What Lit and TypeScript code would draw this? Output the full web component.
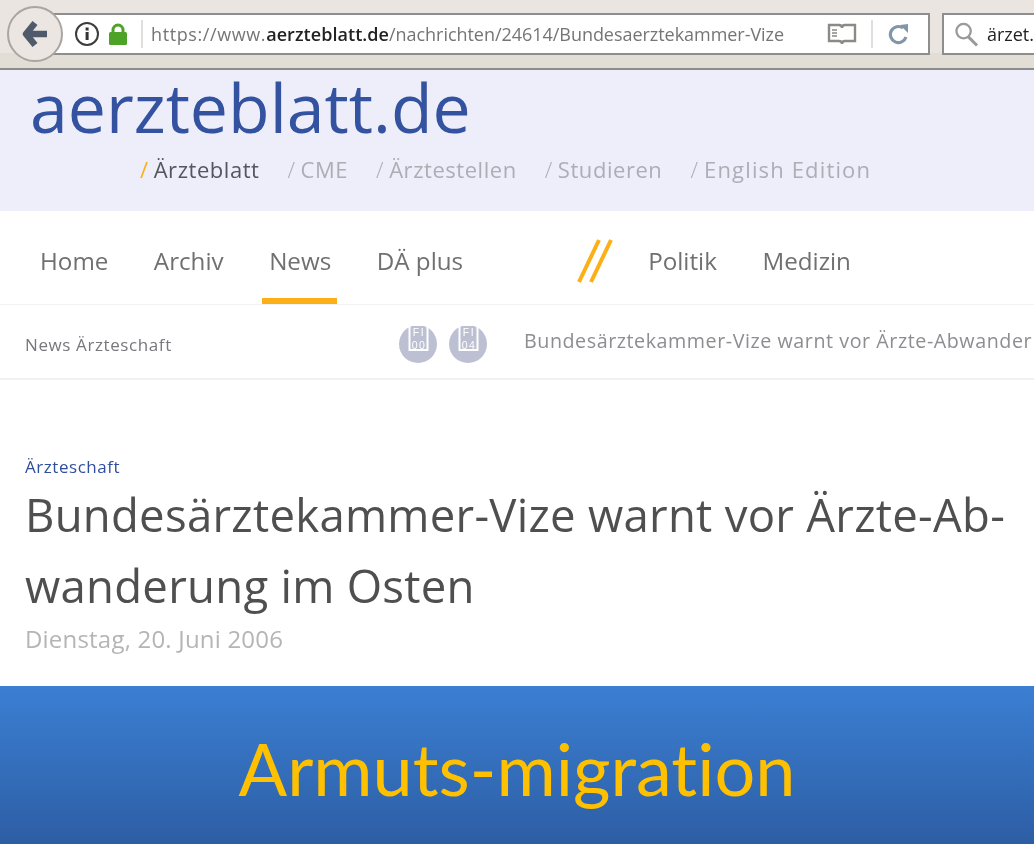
import { LitElement, html, css } from "lit";
import { customElement } from "lit/decorators.js";

@customElement("app-root")
export class AppRoot extends LitElement {
  static styles = css`
    :host {
      display: block;
      width: 1034px;
      height: 844px;
      overflow: hidden;
      background: #fff;
      font-family: "Open Sans", "Noto Sans", sans-serif;
      filter: blur(0.55px);
    }
    .chrome {
      position: relative;
      height: 70px;
      box-sizing: border-box;
      padding: 13px 0 0 49px;
      display: flex;
      gap: 12px;
      align-items: flex-start;
      background: linear-gradient(#ebe5e2 0 78%, #e2ddd5 78% 100%);
      border-bottom: 2px solid #8c8c8c;
    }
    .back {
      position: absolute;
      left: 7px;
      top: 6px;
      width: 56px;
      height: 56px;
      box-sizing: border-box;
      border-radius: 50%;
      border: 2px solid #aaa5a0;
      background: #ece6e2;
      display: flex;
      align-items: center;
      justify-content: center;
    }
    .urlbar {
      width: 881px;
      height: 42px;
      box-sizing: border-box;
      flex: none;
      background: #fff;
      border: 2px solid #8e8e8e;
      display: flex;
      align-items: center;
      padding-left: 23px;
    }
    .urlbar .info { margin-right: 8px; }
    .sep {
      width: 2px;
      height: 28px;
      background: #e2dedb;
      flex: none;
    }
    .sep.a { margin: 0 8px 0 13px; }
    .sep.b { margin: 0 15px 0 14px; }
    .url {
      width: 634px;
      flex: none;
      overflow: hidden;
      white-space: nowrap;
      font-size: 18px;
      color: #757575;
      letter-spacing: -0.04px;
    }
    .url span { letter-spacing: 0.6px; }
    .url b { color: #222; font-weight: 600; letter-spacing: 0.05px; }
    .book { margin-left: 42px; }
    .search {
      flex: 1;
      height: 42px;
      box-sizing: border-box;
      background: #fff;
      border: 2px solid #8e8e8e;
      border-right: none;
      display: flex;
      align-items: center;
      padding-left: 10px;
      gap: 8px;
      font-size: 18px;
      color: #222;
      overflow: hidden;
      white-space: nowrap;
    }
    .brand {
      height: 141px;
      box-sizing: border-box;
      background: #eeeefb;
      padding: 0 0 0 30px;
    }
    .logo {
      font-size: 68px;
      line-height: 74px;
      color: #33529f;
    }
    .portals {
      display: flex;
      margin: 9px 0 0 110px;
      gap: 28px;
      font-size: 22px;
      line-height: 32px;
      color: #adadb4;
      letter-spacing: 0.55px;
      white-space: nowrap;
    }
    .portals i { font-style: normal; font-weight: 300; margin-right: 5px; }
    .portals .on { color: #55555c; }
    .portals .on i { color: #fbb018; font-weight: 400; }
    .portals .wide { letter-spacing: 1.15px; }
    .nav {
      height: 94px;
      box-sizing: border-box;
      display: flex;
      align-items: stretch;
      padding-left: 40px;
      border-bottom: 1px solid #f2f2f2;
      font-size: 24.2px;
      color: #707070;
      white-space: nowrap;
    }
    .nav a {
      display: flex;
      align-items: center;
      padding-top: 5px;
      position: relative;
    }
    .nav .items { display: flex; gap: 45.5px; }
    .nav .active::after {
      content: "";
      position: absolute;
      left: -7px;
      right: -6px;
      bottom: 0;
      height: 6px;
      background: #fbb018;
    }
    .nav .slashes { margin: 27px 35px 0 114px; flex: none; }
    .sub {
      height: 75px;
      box-sizing: border-box;
      display: flex;
      align-items: center;
      padding-left: 25px;
      border-bottom: 2px solid #f1f1f1;
      white-space: nowrap;
      overflow: hidden;
    }
    .sub .rubric {
      width: 373px;
      flex: none;
      font-size: 17px;
      color: #77777c;
      letter-spacing: 0.6px;
      padding-top: 6px;
    }
    .sub .pdf { display: flex; gap: 10px; width: 126px; flex: none; margin-top: 5px; }
    .sub .crumb {
      width: 508px;
      flex: none;
      overflow: hidden;
      font-size: 19.7px;
      color: #8d8d92;
      letter-spacing: 0.55px;
      margin-top: -3px;
    }
    .article {
      height: 306px;
      box-sizing: border-box;
      padding: 75px 0 0 25px;
    }
    .kicker {
      font-size: 17px;
      line-height: 24px;
      color: #2f4f9e;
      letter-spacing: 0.55px;
    }
    h1 {
      margin: 0;
      font-weight: 400;
      font-size: 45.5px;
      line-height: 71px;
      color: #4f4f4f;
      white-space: nowrap;
      letter-spacing: 0.27px;
    }
    .date {
      font-size: 24px;
      line-height: 34px;
      color: #b5b5b5;
      margin-top: 1px;
      letter-spacing: 0.2px;
    }
    .banner {
      height: 158px;
      background: linear-gradient(#3b7fd3, #2d5ea4);
      display: flex;
      justify-content: center;
      font-family: Lato, "Open Sans", sans-serif;
      font-variant-ligatures: none;
      font-size: 72px;
      line-height: 164px;
      color: #ffc000;
    }
    .pdf text {
      font-family: "Liberation Sans", sans-serif;
      font-size: 10.5px;
      letter-spacing: 1.5px;
      fill: #fff;
      text-anchor: middle;
    }
  `;

  private pdfIcon(code: string) {
    return html`<svg width="40" height="40" viewBox="0 0 40 40">
      <circle cx="20" cy="20" r="19" fill="#bcc0d2"></circle>
      <path d="M11.5 1 H29.5 V26 H11.5 Z" fill="none" stroke="#fff" stroke-width="2"></path>
      <text x="21" y="12">FI</text>
      <text x="21" y="24.5">${code}</text>
    </svg>`;
  }

  render() {
    return html`
      <div class="chrome">
        <div class="back">
          <svg width="26" height="28" viewBox="0 0 26 28">
            <path d="M13 3 L4 14 L13 25 M6 14 H25" fill="none" stroke="#4f5b6b" stroke-width="6.5" stroke-linejoin="round"></path>
          </svg>
        </div>
        <div class="urlbar">
          <svg class="info" width="26" height="26" viewBox="0 0 26 26">
            <circle cx="13" cy="13" r="11" fill="none" stroke="#3c3c3c" stroke-width="2"></circle>
            <rect x="11.6" y="11" width="3" height="8" fill="#333"></rect>
            <rect x="11.6" y="6.5" width="3" height="3" fill="#333"></rect>
          </svg>
          <svg width="20" height="24" viewBox="0 0 20 24">
            <path d="M5 11 V8 a5 5 0 0 1 10 0 V11" fill="none" stroke="#4ca328" stroke-width="3"></path>
            <rect x="1" y="10" width="18" height="13" rx="1.5" fill="#4ca328"></rect>
          </svg>
          <div class="sep a"></div>
          <div class="url"><span>https://www.</span><b>aerzteblatt.de</b>/nachrichten/24614/Bundesaerztekammer-Vize</div>
          <svg class="book" width="30" height="24" viewBox="0 0 30 24">
            <path d="M2 3 H12 Q15 3 15 6 Q15 3 18 3 H28 V19 H18 Q15 19 15 22 Q15 19 12 19 H2 Z" fill="none" stroke="#8a8a86" stroke-width="2.4"></path>
            <path d="M5 8 H10 M5 11 H10 M5 14 H10" stroke="#8a8a86" stroke-width="1.6"></path>
          </svg>
          <div class="sep b"></div>
          <svg width="22" height="24" viewBox="0 0 22 24">
            <path d="M18 15 A8 8 0 1 1 15 6" fill="none" stroke="#8296a8" stroke-width="3.2"></path>
            <path d="M12 3 L20 2 L20 11 Z" fill="#8296a8"></path>
          </svg>
        </div>
        <div class="search">
          <svg width="26" height="28" viewBox="0 0 26 28">
            <circle cx="10" cy="11" r="7.5" fill="none" stroke="#9a9a9a" stroke-width="2.4"></circle>
            <path d="M15 17 L24 26" stroke="#9a9a9a" stroke-width="3.2"></path>
          </svg>
          <span>ärzet.</span>
        </div>
      </div>

      <div class="brand">
        <div class="logo">aerzteblatt.de</div>
        <div class="portals">
          <span class="on"><i>/</i>Ärzteblatt</span>
          <span><i>/</i>CME</span>
          <span><i>/</i>Ärztestellen</span>
          <span><i>/</i>Studieren</span>
          <span class="wide"><i>/</i>English Edition</span>
        </div>
      </div>

      <div class="nav">
        <div class="items">
          <a>Home</a><a>Archiv</a><a class="active">News</a><a>DÄ plus</a>
        </div>
        <svg class="slashes" width="36" height="46" viewBox="0 0 36 46">
          <path d="M2 44 L22 2 M14 44 L34 2" stroke="#fbb018" stroke-width="4" fill="none"></path>
        </svg>
        <div class="items"><a>Politik</a><a>Medizin</a></div>
      </div>

      <div class="sub">
        <div class="rubric">News Ärzteschaft</div>
        <div class="pdf">${this.pdfIcon("00")}${this.pdfIcon("04")}</div>
        <div class="crumb">Bundesärztekammer-Vize warnt vor Ärzte-Abwanderung im Osten</div>
      </div>

      <div class="article">
        <div class="kicker">Ärzteschaft</div>
        <h1>Bundesärztekammer-Vize warnt vor Ärzte-Ab-<br />wanderung im Osten</h1>
        <div class="date">Dienstag, 20. Juni 2006</div>
      </div>

      <div class="banner">Armuts-migration</div>
    `;
  }
}
